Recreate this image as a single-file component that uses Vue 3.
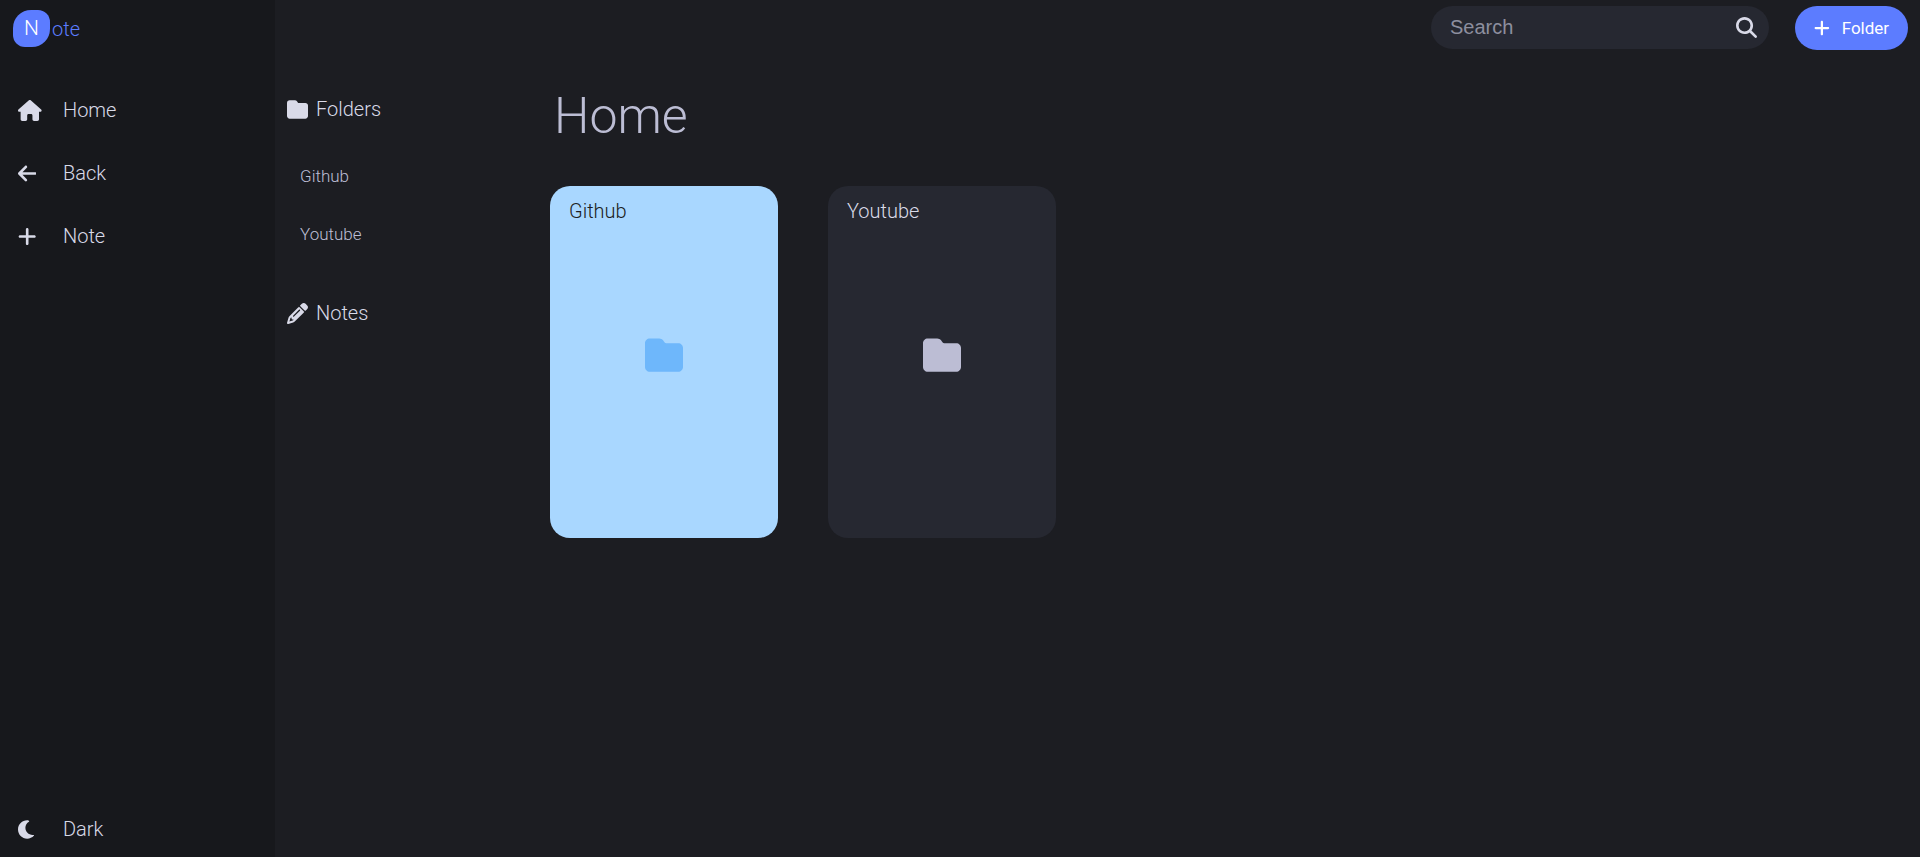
<script setup>
import { ref } from 'vue'

const icons = {
  home: { box: '0 0 576 512', d: 'M575.8 255.5c0 18-15 32.1-32 32.1h-32l.7 184.4c0 22.1-17.9 40-40 40H392c-22.1 0-40-17.900-40-40V376c0-17.700-14.300-32-32-32h-64c-17.700 0-32 14.300-32 32v96c0 22.100-17.900 40-40 40H104c-22.100 0-40-17.900-40-40V287.600H32c-18 0-32-14-32-32.100 0-9 3-17 10-24L266.400 8c7-7 15-8 22-8s15 2 21 7l255.400 224.500c8 7 12 15 11 24z' },
  back: { box: '0 0 448 512', d: 'M9.4 233.4c-12.5 12.5-12.5 32.8 0 45.3l160 160c12.5 12.5 32.8 12.5 45.3 0s12.5-32.8 0-45.300L109.200 288H416c17.700 0 32-14.300 32-32s-14.300-32-32-32H109.300l105.400-105.400c12.500-12.500 12.500-32.800 0-45.300s-32.800-12.500-45.300 0l-160 160z' },
  plus: { box: '0 0 448 512', d: 'M256 80c0-17.7-14.3-32-32-32s-32 14.3-32 32v144H48c-17.7 0-32 14.3-32 32s14.3 32 32 32h144v144c0 17.7 14.3 32 32 32s32-14.3 32-32V288h144c17.7 0 32-14.3 32-32s-14.3-32-32-32H256V80z' },
  moon: { box: '0 0 448 512', d: 'M224 32C100 32 0 132 0 256s100 224 224 224c64 0 122-27 163-70 8-8 3-21-8-21-8 1-16 2-24 2-97 0-175-78-175-175 0-65 35-121 87-151 10-6 8-20-4-23-13-6-26-10-39-10z' },
  folder: { box: '0 0 512 512', d: 'M64 480h384c35.3 0 64-28.7 64-64V160c0-35.3-28.7-64-64-64H288c-10.1 0-19.6-4.7-25.6-12.8l-19.2-25.6C231.1 41.5 212.1 32 192 32H64C28.7 32 0 60.7 0 96v320c0 35.3 28.7 64 64 64z' },
  pencil: { box: '0 0 512 512', d: 'M410.3 231l11.3-11.3-33.9-33.9-62.1-62.1-33.9-33.9-11.3 11.3-22.6 22.6L58.6 322.9c-10.4 10.4-18 23.3-22.2 37.4L1 480.7c-2.5 8.4-.2 17.5 6.1 23.7s15.3 8.5 23.7 6.1l120.3-35.4c14.1-4.2 27-11.8 37.4-22.2l199.2-199.2 22.6-22.7zM160 399.4l-9.1 22.7c-4 3.1-8.5 5.4-13.3 6.9L59.4 452l23-78.1c1.4-4.9 3.8-9.4 6.9-13.3l22.7-9.1v32c0 8.8 7.2 16 16 16h32zM362.7 18.7L348.3 33.2l-22.6 22.6-11.3 11.3 33.9 33.9 62.1 62.1 33.9 33.9 11.3-11.3 22.6-22.6 14.5-14.5c25-25 25-65.5 0-90.5l-39.4-39.4c-25-25-65.5-25-90.5 0zm-47.4 168l-144 144c-6.2 6.2-16.4 6.2-22.6 0s-6.2-16.4 0-22.6l144-144c6.2-6.2 16.4-6.2 22.6 0s6.2 16.4 0 22.6z' },
  search: { box: '0 0 512 512', d: 'M416 208c0 45.9-14.9 88.3-40 122.7l126.6 126.7c12.5 12.5 12.5 32.8 0 45.3s-32.8 12.5-45.3 0L330.7 376c-34.4 25.2-76.8 40-122.7 40C93.1 416 0 322.9 0 208S93.1 0 208 0s208 93.1 208 208zM208 352a144 144 0 1 0 0-288 144 144 0 1 0 0 288z' }
}

const nav = [
  { icon: 'home', label: 'Home' },
  { icon: 'back', label: 'Back' },
  { icon: 'plus', label: 'Note' }
]
const folders = ['Github', 'Youtube']
const active = ref('Github')
const query = ref('')
</script>

<template>
  <div class="app">
    <aside class="sidebar">
      <a class="logo" href="#"><span class="badge">N</span>ote</a>
      <nav class="nav">
        <button v-for="n in nav" :key="n.label" class="item" type="button">
          <span class="slot"><svg class="icon" :viewBox="icons[n.icon].box" aria-hidden="true"><path :d="icons[n.icon].d" /></svg></span>
          {{ n.label }}
        </button>
      </nav>
      <button class="item theme" type="button">
        <span class="slot"><svg class="icon" :viewBox="icons.moon.box" aria-hidden="true"><path :d="icons.moon.d" /></svg></span>
        Dark
      </button>
    </aside>

    <div class="content">
      <header class="top">
        <form class="search" role="search" @submit.prevent>
          <input v-model="query" type="text" placeholder="Search" aria-label="Search" />
          <button type="submit" aria-label="Submit search">
            <svg :viewBox="icons.search.box" aria-hidden="true"><path :d="icons.search.d" /></svg>
          </button>
        </form>
        <button class="add" type="button">
          <svg :viewBox="icons.plus.box" aria-hidden="true"><path :d="icons.plus.d" /></svg>
          Folder
        </button>
      </header>

      <div class="body">
        <section class="tree">
          <h2><svg :viewBox="icons.folder.box" aria-hidden="true"><path :d="icons.folder.d" /></svg>Folders</h2>
          <ul>
            <li v-for="f in folders" :key="f"><a href="#">{{ f }}</a></li>
          </ul>
          <h2><svg :viewBox="icons.pencil.box" aria-hidden="true"><path :d="icons.pencil.d" fill-rule="evenodd" /></svg>Notes</h2>
        </section>

        <main class="main">
          <h1>Home</h1>
          <div class="cards">
            <button v-for="f in folders" :key="f" class="card" :class="{ active: f === active }" type="button" @click="active = f">
              <span class="name">{{ f }}</span>
              <svg :viewBox="icons.folder.box" aria-hidden="true"><path :d="icons.folder.d" /></svg>
            </button>
          </div>
        </main>
      </div>
    </div>
  </div>
</template>

<style>
body { background: #1c1d22; }
</style>

<style scoped>
.app {
  display: flex;
  min-height: 100vh;
  background: #1c1d22;
  color: #d9dae8;
  font-family: Roboto, sans-serif;
  font-weight: 300;
}
* { box-sizing: border-box; }
button {
  border: 0;
  padding: 0;
  background: none;
  color: inherit;
  font: inherit;
  cursor: pointer;
}
a { color: inherit; text-decoration: none; }
svg { display: block; fill: currentColor; flex: none; }
.sidebar {
  flex: none;
  width: 275px;
  display: flex;
  flex-direction: column;
  padding: 10px 13px 8px;
  background: #17181c;
}
.logo {
  display: flex;
  align-items: center;
  gap: 2px;
  color: #5c7cff;
  font-size: 20px;
}
.badge {
  width: 37px;
  height: 37px;
  border-radius: 18px 12px 18px 12px;
  background: #5c7cff;
  color: #fff;
  font-size: 21px;
  line-height: 36px;
  text-align: center;
}
.nav {
  display: flex;
  flex-direction: column;
  gap: 23px;
  margin-top: 43px;
}
.item {
  display: flex;
  align-items: center;
  height: 40px;
  padding-left: 5px;
  font-size: 20px;
}
.slot { width: 45px; }
.icon { height: 21px; }
.theme { margin-top: auto; }
.content { flex: 1; min-width: 0; }
.top {
  display: flex;
  justify-content: flex-end;
  gap: 26px;
  padding: 6px 12px 0;
}
.search {
  display: flex;
  align-items: center;
  width: 338px;
  height: 43px;
  padding: 0 12px 0 19px;
  border-radius: 22px;
  background: #262831;
}
.search input {
  flex: 1;
  min-width: 0;
  padding: 0;
  border: 0;
  outline: 0;
  background: none;
  color: inherit;
  font: 20px "Liberation Sans", Arial, sans-serif;
}
.search input::placeholder { color: #8d8f9f; }
.search svg { width: 21px; height: 21px; }
.add {
  display: flex;
  align-items: center;
  justify-content: center;
  gap: 12px;
  min-width: 113px;
  height: 44px;
  padding: 0 18px;
  border-radius: 22px;
  background: #5c7cff;
  color: #fff;
  font-size: 17px;
  font-weight: 400;
}
.add svg { height: 18px; }
.body { display: flex; }
.tree {
  flex: none;
  width: 275px;
  padding: 47px 12px;
}
.tree h2 {
  display: flex;
  align-items: center;
  gap: 8px;
  margin: 0;
  font-size: 20px;
  font-weight: 300;
  line-height: 24px;
}
.tree h2 svg { width: 21px; }
.tree ul {
  margin: 26px 0 38px;
  padding: 0 0 0 13px;
  list-style: none;
  color: #bcbdd4;
  font-size: 17px;
  line-height: 58px;
}
.main { flex: 1; min-width: 0; padding: 36px 0; }
.main h1 {
  margin: 0 0 40px;
  padding-left: 4px;
  color: #bcbdd4;
  font-size: 50px;
  font-weight: 300;
  line-height: 60px;
}
.cards { display: flex; flex-wrap: wrap; gap: 50px; }
.card {
  position: relative;
  display: grid;
  place-items: center;
  width: 228px;
  height: 352px;
  padding-bottom: 14px;
  border-radius: 20px;
  background: #262831;
}
.card svg { width: 38px; color: #bcbdd4; }
.name { position: absolute; top: 13px; left: 19px; font-size: 20px; line-height: 24px; }
.card.active { background: #a9d7ff; color: #1c1d22; }
.card.active svg { color: #6eb7fb; }
</style>
